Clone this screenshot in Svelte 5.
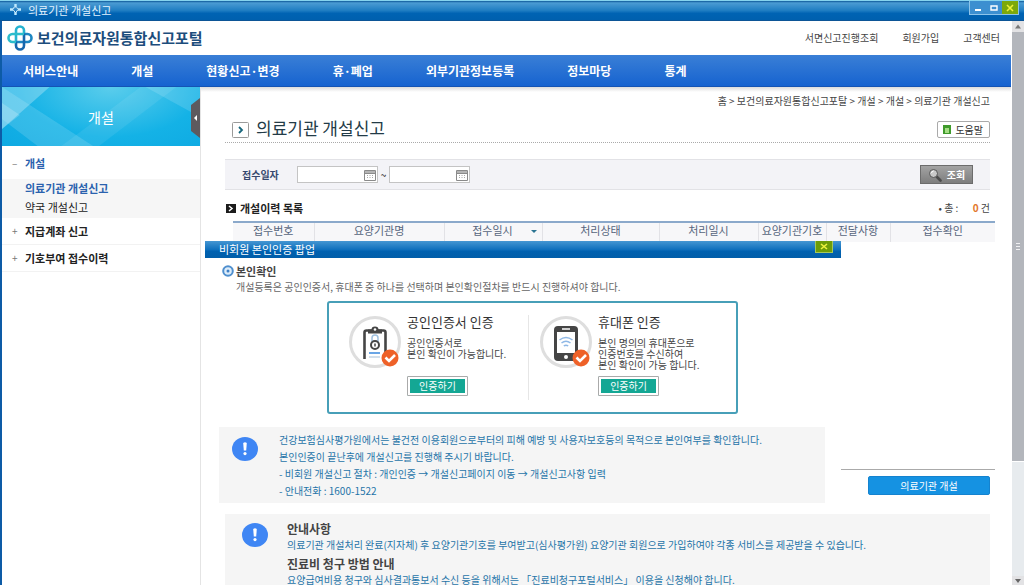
<script lang="ts">
  const menu = ["서비스안내", "개설", "현황신고·변경", "휴·폐업", "외부기관정보등록", "정보마당", "통계"];
  const topLinks = ["서면신고진행조회", "회원가입", "고객센터"];

  // width is relative, the table spreads it over the whole row
  const columns = [
    { label: "접수번호", width: 81 },
    { label: "요양기관명", width: 130 },
    { label: "접수일시", width: 98, sorted: true },
    { label: "처리상태", width: 117 },
    { label: "처리일시", width: 99 },
    { label: "요양기관기호", width: 68 },
    { label: "전달사항", width: 64 },
    { label: "접수확인", width: 105 },
  ];
  const total = columns.reduce((sum, c) => sum + c.width, 0);

  const methods = [
    { id: "cert", title: "공인인증서 인증", lines: ["공인인증서로", "본인 확인이 가능합니다."] },
    { id: "phone", title: "휴대폰 인증", lines: ["본인 명의의 휴대폰으로", "인증번호를 수신하여", "본인 확인이 가능 합니다."] },
  ];

  let dateFrom = "";
  let dateTo = "";
</script>

{#snippet alertIcon()}
  <svg class="alert" width="26" height="24" viewBox="0 0 26 24" aria-hidden="true">
    <ellipse cx="13" cy="12" rx="13" ry="12" fill="#3f86f4" />
    <path d="M11.2 6q1.8-1.4 3.6 0l-.6 7.6h-2.4z" fill="#fff" />
    <circle cx="13" cy="16.6" r="1.6" fill="#fff" />
  </svg>
{/snippet}

{#snippet calendarIcon()}
  <svg width="12" height="12" viewBox="0 0 12 12" aria-hidden="true">
    <path d="M.5 1.5h11v10H.5zM.5 4.5h11" fill="#fff" stroke="#8a8a8a" />
    <path d="M1 3h10" stroke="#b5b5b5" stroke-width="2" />
    <path d="M3.5 6v4M6 6v4M8.5 6v4" stroke="#aaa" stroke-dasharray="1 1" />
  </svg>
{/snippet}

<div class="window">
  <div class="titlebar">
    <svg width="11" height="11" viewBox="0 0 11 11" aria-hidden="true">
      <path d="M5.5 0v3M5.5 8v3M0 5.5h3M8 5.5h3" stroke="#bfeaff" stroke-width="2.4" />
      <path d="M3.6 3.6h3.8v3.8H3.6z" fill="none" stroke="#e8f8ff" stroke-dasharray="1 1" />
    </svg>
    <span>의료기관 개설신고</span>
    <div class="window-buttons">
      <button aria-label="최소화">
        <svg width="16" height="13" viewBox="0 0 16 13"><path d="M5 9h6" stroke="#fff" stroke-width="2" /></svg>
      </button>
      <button aria-label="최대화">
        <svg width="16" height="13" viewBox="0 0 16 13"><path d="M5 5h6v4H5z" fill="none" stroke="#fff" stroke-width="1.4" /></svg>
      </button>
      <button class="close" aria-label="닫기">
        <svg width="16" height="13" viewBox="0 0 16 13"><path d="M5 4l6 6M11 4l-6 6" stroke="#eef23c" stroke-width="1.6" /></svg>
      </button>
    </div>
  </div>

  <div class="frame">
    <div class="page">
      <header>
        <a class="logo" href="/">
          <svg width="26" height="26" viewBox="0 0 26 26" fill="none" stroke-width="2.6" aria-hidden="true">
            <path d="M9 17V5.5a4 4 0 0 1 8 0V9" stroke="#25b3d0" />
            <path d="M17 9h3.5a4 4 0 0 1 0 8H9" stroke="#1d86c2" />
            <path d="M17 9v11.5a4 4 0 0 1-8 0V17" stroke="#1767ad" />
            <path d="M9 17H5.5a4 4 0 0 1 0-8H17" stroke="#2bbccb" />
          </svg>
          <span>보건의료자원통합신고포털</span>
        </a>
        <div class="top-links">
          {#each topLinks as link}
            <a href="/">{link}</a>
          {/each}
        </div>
      </header>

      <nav class="menu">
        {#each menu as item}
          <a href="/">{item}</a>
        {/each}
      </nav>

      <div class="body">
        <aside>
          <div class="banner">
            <svg class="rays" viewBox="0 0 200 59" preserveAspectRatio="none" aria-hidden="true">
              <path d="M0 0h48L0 42z" fill="#fff" opacity=".28" />
              <path d="M0 16l18 12L0 42z" fill="#fff" opacity=".2" />
              <path d="M0 0l92 59H36L0 32z" fill="#fff" opacity=".14" />
              <path d="M60 59L140 0h36L98 59z" fill="#fff" opacity=".08" />
              <path d="M145 0h55v30z" fill="#fff" opacity=".14" />
            </svg>
            <span>개설</span>
            <button class="fold" aria-label="메뉴 접기">
              <svg width="9" height="40" viewBox="0 0 9 40">
                <path d="M9 0L0 7v26l9 7z" fill="#5d5a5e" />
                <path d="M6 17v6l-3-3z" fill="#fff" />
              </svg>
            </button>
          </div>
          <a class="group open" href="/"><i>–</i>개설</a>
          <div class="sub">
            <a class="current" href="/">의료기관 개설신고</a>
            <a href="/">약국 개설신고</a>
          </div>
          <a class="group" href="/"><i>+</i>지급계좌 신고</a>
          <a class="group" href="/"><i>+</i>기호부여 접수이력</a>
        </aside>

        <main>
          <div class="crumbs">홈 &gt; 보건의료자원통합신고포탈 &gt; 개설 &gt; 개설 &gt; 의료기관 개설신고</div>

          <div class="title-row">
            <svg width="17" height="16" viewBox="0 0 17 16" aria-hidden="true">
              <rect x=".5" y=".5" width="16" height="15" rx="1" fill="#fff" stroke="#9a9a9a" />
              <path d="M7 5l3 3-3 3" fill="none" stroke="#17667c" stroke-width="1.8" />
            </svg>
            <h1>의료기관 개설신고</h1>
            <button class="help">
              <svg width="8" height="9" viewBox="0 0 8 9" aria-hidden="true">
                <path d="M0 0h8v9H0z" fill="#3f9a2c" />
                <path d="M2 3h4v5H2z" fill="#a5dd85" />
              </svg>
              도움말
            </button>
          </div>

          <form class="search" on:submit|preventDefault>
            <label for="from">접수일자</label>
            <div class="date">
              <input id="from" type="text" bind:value={dateFrom} />
              <button type="button" aria-label="시작일 선택">{@render calendarIcon()}</button>
            </div>
            <span class="tilde">~</span>
            <div class="date">
              <input type="text" aria-label="종료일" bind:value={dateTo} />
              <button type="button" aria-label="종료일 선택">{@render calendarIcon()}</button>
            </div>
            <button class="submit">
              <svg width="14" height="14" viewBox="0 0 14 14" aria-hidden="true">
                <path d="M8.5 8.5l4 4" stroke="#4c4c4c" stroke-width="2.6" stroke-linecap="round" />
                <circle cx="5.5" cy="5.5" r="4" fill="#c9c9c9" stroke="#555" />
                <path d="M3.5 5a2 2 0 0 1 2-1.8" fill="none" stroke="#fff" />
              </svg>
              조회
            </button>
          </form>

          <div class="list-head">
            <svg width="10" height="9" viewBox="0 0 10 9" aria-hidden="true">
              <path d="M0 0h10v9H0z" fill="#1c1c1c" />
              <path d="M3 2l3 2.5L3 7" fill="none" stroke="#fff" stroke-width="1.5" />
            </svg>
            <h2>개설이력 목록</h2>
            <p>• 총 : <b>0</b> 건</p>
          </div>

          <table>
            <colgroup>
              {#each columns as col}
                <col style:width={`${(col.width / total) * 100}%`} />
              {/each}
            </colgroup>
            <thead>
              <tr>
                {#each columns as col}
                  <th class:sorted={col.sorted}>{col.label}</th>
                {/each}
              </tr>
            </thead>
          </table>
          <div class="empty"></div>

          <div class="actions">
            <button class="primary">의료기관 개설</button>
          </div>

          <section class="notice">
            {@render alertIcon()}
            <div>
              <h3>안내사항</h3>
              <p>의료기관 개설처리 완료(지자체) 후 요양기관기호를 부여받고(심사평가원) 요양기관 회원으로 가입하여야 각종 서비스를 제공받을 수 있습니다.</p>
              <h3>진료비 청구 방법 안내</h3>
              <p>요양급여비용 청구와 심사결과통보서 수신 등을 위해서는 「진료비청구포털서비스」 이용을 신청해야 합니다.</p>
            </div>
          </section>

          <div class="popup" role="dialog" aria-label="비회원 본인인증 팝업">
            <div class="popup-bar">
              <span>비회원 본인인증 팝업</span>
              <button aria-label="팝업 닫기">
                <svg width="16" height="11" viewBox="0 0 16 11"><path d="M5 3l6 5M11 3L5 8" stroke="#eef23c" stroke-width="1.6" /></svg>
              </button>
            </div>
            <div class="popup-body">
              <h2>
                <svg width="12" height="12" viewBox="0 0 12 12" aria-hidden="true">
                  <circle cx="6" cy="6" r="4.8" fill="#dcecfa" stroke="#4f8fce" stroke-width="2" />
                  <circle cx="6" cy="6" r="1.5" fill="#3d7fc4" />
                </svg>
                본인확인
              </h2>
              <p class="lead">개설등록은 공인인증서, 휴대폰 중 하나를 선택하며 본인확인절차를 반드시 진행하셔야 합니다.</p>

              <div class="methods">
                {#each methods as method (method.id)}
                  <div class="method">
                    <svg width="54" height="54" viewBox="0 0 54 54" aria-hidden="true">
                      <circle cx="27" cy="27" r="24.5" fill="#fff" stroke="#dedede" stroke-width="3" />
                      {#if method.id === "cert"}
                        <path d="M16.5 44V17.5q0-2 2-2h17q2 0 2 2V44" fill="#fff" stroke="#454545" stroke-width="2.6" />
                        <path d="M20 18.5v-4h3.5q0-3 3.5-3t3.5 3H34v4z" fill="#454545" />
                        <circle cx="27" cy="14.5" r="1.3" fill="#fff" />
                        <path d="M24 27v-4q0-3 3-3t3 3v4" fill="none" stroke="#9ec0df" stroke-width="1.5" />
                        <circle cx="27" cy="30" r="4" fill="#fff" stroke="#454545" stroke-width="2" />
                        <path d="M27 28.5v3" stroke="#454545" stroke-width="1.5" />
                        <path d="M21 38h11" stroke="#6aa6e6" stroke-width="2" />
                        <path d="M21 42h11" stroke="#c3d4e4" stroke-width="1.5" />
                      {:else}
                        <rect x="15" y="11" width="24" height="35" rx="4" fill="#454545" />
                        <path d="M18 17h18v21H18z" fill="#fff" />
                        <path d="M23 14h8" stroke="#fff" stroke-width="1.5" />
                        <circle cx="27" cy="42" r="2" fill="#fff" />
                        <path d="M20.5 25q6.500-5 13 0M22.500 28q4.500-3.500 9 0M24.800 31q2.200-1.700 4.400 0" fill="none" stroke="#8fb8e6" stroke-width="1.5" />
                      {/if}
                      <circle cx="42" cy="43" r="8.5" fill="#ee6128" />
                      <path d="M37.5 42.500l3.500 3.500 6-6" fill="none" stroke="#fff" stroke-width="2.6" />
                    </svg>
                    <div class="method-text">
                      <h3>{method.title}</h3>
                      <p>
                        {#each method.lines as line}
                          <span>{line}</span>
                        {/each}
                      </p>
                      <button>인증하기</button>
                    </div>
                  </div>
                {/each}
              </div>

              <section class="notice">
                {@render alertIcon()}
                <div>
                  <p>건강보험심사평가원에서는 불건전 이용회원으로부터의 피해 예방 및 사용자보호등의 목적으로 본인여부를 확인합니다.</p>
                  <p>본인인증이 끝난후에 개설신고를 진행해 주시기 바랍니다.</p>
                  <p>- 비회원 개설신고 절차 : 개인인증 → 개설신고페이지 이동 → 개설신고사항 입력</p>
                  <p>- 안내전화 : 1600-1522</p>
                </div>
              </section>
            </div>
          </div>
        </main>
      </div>
    </div>

    <div class="scroll" aria-hidden="true">
      <svg class="arrow" width="12" height="11" viewBox="0 0 12 11"><path d="M3 7.500h6L6 3.500z" fill="#777" /></svg>
      <div class="thumb"><i></i></div>
      <svg class="arrow" width="12" height="9" viewBox="0 0 12 9"><path d="M3 3h6L6 7z" fill="#666" /></svg>
    </div>
  </div>
</div>

<style>
  :global(body) {
    margin: 0;
    overflow: hidden;
  }

  .window {
    height: 100vh;
    display: flex;
    flex-direction: column;
    overflow: hidden;
    background: #fff;
    color: #444;
    font-family: "Noto Sans CJK KR", sans-serif;
    font-size: 10px;
    line-height: 16px;
    white-space: nowrap;
  }

  h1,
  h2,
  h3,
  p {
    margin: 0;
  }
  a {
    color: inherit;
    text-decoration: none;
  }
  button {
    font: inherit;
    padding: 0;
    border: 0;
    cursor: pointer;
  }
  svg {
    display: block;
    flex: none;
  }
  i {
    font-style: normal;
  }

  /* window chrome */
  .titlebar {
    flex: none;
    box-sizing: border-box;
    height: 21px;
    display: flex;
    align-items: center;
    gap: 7px;
    padding: 0 5px 2px 10px;
    border-top: 1px solid #86d3ee;
    border-bottom: 1px solid #0c5596;
    background: linear-gradient(#0c5798, #4b9bd3 10%, #1f7dc2 50%, #0063b3 65%, #0060ae);
    color: #e4f3ff;
    font-size: 11px;
  }
  .window-buttons {
    align-self: flex-start;
    margin-left: auto;
    display: flex;
    border: 1px solid #8dc4ea;
    border-top: 0;
  }
  .window-buttons button {
    background: #3c8fd0;
  }
  .window-buttons .close {
    background: #7ca80c;
  }

  .frame {
    flex: 1;
    min-height: 0;
    display: flex;
    border-left: 2px solid #0d5ba6;
  }
  .page {
    flex: 1;
    min-width: 0;
    display: flex;
    flex-direction: column;
  }

  header {
    flex: none;
    height: 34px;
    display: flex;
    align-items: center;
    justify-content: space-between;
    padding: 0 11px 0 5px;
  }
  .logo {
    display: flex;
    align-items: center;
    gap: 4px;
    color: #1c4d7c;
    font-size: 15px;
    font-weight: bold;
  }
  .top-links {
    display: flex;
    gap: 24px;
  }

  .menu {
    flex: none;
    box-sizing: border-box;
    height: 32px;
    display: flex;
    align-items: center;
    gap: 53px;
    padding: 0 21px;
    background: linear-gradient(#3a7fd6, #1663d0);
    border-bottom: 1px solid #1454b4;
    color: #fff;
    font-size: 12px;
    font-weight: bold;
  }

  .body {
    flex: 1;
    min-height: 0;
    display: flex;
  }

  /* left menu */
  aside {
    flex: none;
    box-sizing: border-box;
    width: 199px;
    font-size: 11px;
    color: #222;
    border-right: 1px solid #e4e4e4;
  }
  .banner {
    position: relative;
    height: 59px;
    display: flex;
    align-items: center;
    justify-content: center;
    background: radial-gradient(ellipse at 55% 0, #5bcdec, #14b2e6 60%, #0ea9e2);
    color: #fff;
    font-size: 14px;
  }
  .banner span {
    position: relative;
  }
  .rays {
    position: absolute;
    inset: 0;
    width: 100%;
    height: 100%;
  }
  .fold {
    position: absolute;
    right: 0;
    top: 11px;
    background: none;
  }
  .group {
    display: flex;
    align-items: center;
    height: 26px;
    padding-left: 10px;
    border-bottom: 1px solid #f2f2f2;
    font-weight: bold;
  }
  .group i {
    width: 13px;
    color: #777;
    font-size: 10px;
    font-weight: normal;
  }
  .group.open {
    height: 32px;
    padding-top: 1px;
    border-bottom: 0;
    color: #2b62ae;
  }
  .sub {
    padding-bottom: 1px;
    background: #f6f6f6;
  }
  .sub a {
    display: block;
    padding-left: 23px;
    line-height: 19px;
  }
  .sub .current {
    color: #2b62ae;
    font-weight: bold;
  }

  main {
    position: relative;
    flex: 1;
    min-width: 0;
    overflow: hidden;
    padding: 0 21px 0 24px;
    background: linear-gradient(#dcdcdc, #fff 5px);
  }
  .crumbs {
    padding-top: 6px;
    text-align: right;
  }
  .title-row {
    display: flex;
    align-items: center;
    margin-top: 8px;
    height: 25px;
    padding-left: 7px;
    border-bottom: 1px dotted #aaa;
  }
  h1 {
    margin-left: 7px;
    padding-bottom: 3px;
    color: #233b47;
    font-size: 17px;
    font-weight: normal;
  }
  .help {
    display: flex;
    align-items: center;
    gap: 4px;
    margin-left: auto;
    padding: 0 6px 0 5px;
    border: 1px solid #aaa;
    border-radius: 2px;
    background: #fff;
    color: #333;
    line-height: 15px;
  }

  .search {
    display: flex;
    align-items: center;
    box-sizing: border-box;
    height: 31px;
    margin-top: 16px;
    padding: 0 17px;
    border: 1px solid #e2e2e6;
    border-width: 1px 0;
    background: #f3f3f7;
  }
  .search label {
    width: 55px;
    color: #35486e;
    font-weight: bold;
  }
  .date {
    display: flex;
    align-items: center;
    width: 78px;
    height: 15px;
    padding-right: 1px;
    border: 1px solid #c4c4c4;
    background: #fff;
  }
  .date input {
    flex: 1;
    min-width: 0;
    padding: 0 2px;
    border: 0;
    background: none;
    font: inherit;
  }
  .date button {
    background: none;
  }
  .tilde {
    width: 11px;
    text-align: center;
    color: #222;
  }
  .submit {
    display: flex;
    align-items: center;
    justify-content: center;
    gap: 5px;
    width: 53px;
    height: 19px;
    margin-left: auto;
    border: 1px solid #6c6c6c;
    background: linear-gradient(#a3a3a3, #7e7e7e);
    color: #fff;
    font-weight: bold;
  }

  .list-head {
    display: flex;
    align-items: center;
    gap: 4px;
    height: 20px;
    margin-top: 8px;
    padding-left: 1px;
  }
  .list-head h2 {
    color: #222;
    font-size: 11px;
  }
  .list-head p {
    margin-left: auto;
  }
  .list-head b {
    margin-left: 12px;
    color: #e2762a;
  }

  table {
    width: calc(100% - 3px);
    margin: 3px -5px 0 8px;
    table-layout: fixed;
    border-collapse: collapse;
    border-top: 2px solid #8ba9cb;
    background: #f7f7f9;
    color: #56657c;
    font-size: 11px;
  }
  th {
    height: 19px;
    padding: 0;
    border-left: 1px solid #e2e2e6;
    font-weight: normal;
    line-height: 14px;
    vertical-align: top;
  }
  th:first-child {
    border-left: 0;
  }
  .sorted::after {
    content: "";
    float: right;
    margin: 7px 5px 0 -10px;
    border: 3px solid transparent;
    border-top-color: #2a7492;
    border-bottom: 0;
  }

  .empty {
    height: 227px;
    margin: 0 -5px 0 8px;
    border-bottom: 1px solid #aaa;
  }
  .actions {
    display: flex;
    justify-content: flex-end;
    margin-top: 6px;
  }
  .primary {
    width: 122px;
    height: 19px;
    border: 1px solid #1583cf;
    border-radius: 2px;
    background: #1592e2;
    color: #fff;
  }

  .notice {
    display: flex;
    margin-top: 19px;
    padding: 7px 17px 8px;
    background: #f5f5f5;
    color: #1f74a8;
  }
  .notice .alert {
    margin: 2px 19px 0 0;
  }
  .notice h3 {
    color: #444;
    font-size: 12px;
  }
  .notice p + h3 {
    margin-top: 3px;
  }

  /* popup */
  .popup {
    position: absolute;
    left: 4px;
    top: 154px;
    width: 636px;
    background: #fff;
  }
  .popup-bar {
    display: flex;
    justify-content: space-between;
    height: 17px;
    padding: 0 8px 0 14px;
    background: linear-gradient(#4596d2, #0f70bd 50%, #0061b0 60%, #015ea9);
    color: #fff;
    font-size: 11px;
  }
  .popup-bar button {
    align-self: flex-start;
    border: 1px solid #a5c85a;
    border-top: 0;
    background: #6d9c08;
  }
  .popup-body {
    padding: 5px 16px 6px 14px;
  }
  .popup h2 {
    display: flex;
    align-items: center;
    gap: 2px;
    padding-left: 3px;
    color: #444;
    font-size: 11px;
    font-weight: bold;
  }
  .lead {
    padding-left: 17px;
    color: #666;
  }
  .methods {
    display: grid;
    grid-template-columns: 9fr 10fr;
    box-sizing: border-box;
    width: 411px;
    height: 113px;
    margin: 6px 0 0 108px;
    padding: 12px 9px 12px 20px;
    border: 2px solid #479fb8;
    border-radius: 3px;
  }
  .method {
    display: flex;
    gap: 5px;
  }
  .method + .method {
    padding-left: 11px;
    border-left: 1px solid #e6e6e6;
  }
  .method > svg {
    margin-left: -1px;
  }
  .method-text {
    display: flex;
    flex-direction: column;
    align-items: flex-start;
  }
  .method h3 {
    line-height: 14px;
    color: #333;
    font-size: 13px;
    font-weight: normal;
  }
  .method p {
    margin-top: 8px;
    min-height: 33px;
    line-height: 11px;
  }
  .method p span {
    display: block;
  }
  .method button {
    width: 61px;
    height: 20px;
    margin-top: 6px;
    border: 1px solid #aaa;
    border-radius: 1px;
    background: #14a794;
    box-shadow: inset 0 0 0 2px #fff;
    color: #fff;
    line-height: 16px;
  }
  .popup .notice {
    margin-top: 13px;
    padding: 4px 13px;
  }
  .popup .notice .alert {
    margin: 6px 21px 0 0;
  }
  .popup .notice p {
    line-height: 17px;
  }

  /* scrollbar */
  .scroll {
    flex: none;
    width: 12px;
    display: flex;
    flex-direction: column;
    background: #e7ebee;
    border-left: 1px solid #fff;
  }
  .arrow {
    background: #e2e2e4;
  }
  .thumb {
    display: flex;
    align-items: center;
    justify-content: center;
    height: 76%;
    margin-bottom: auto;
    background: #b3b6bc;
    border-bottom: 1px solid #fff;
  }
  .thumb i {
    width: 4px;
    height: 7px;
    background: repeating-linear-gradient(#f0f0f2 0 1px, transparent 1px 3px);
  }
</style>
